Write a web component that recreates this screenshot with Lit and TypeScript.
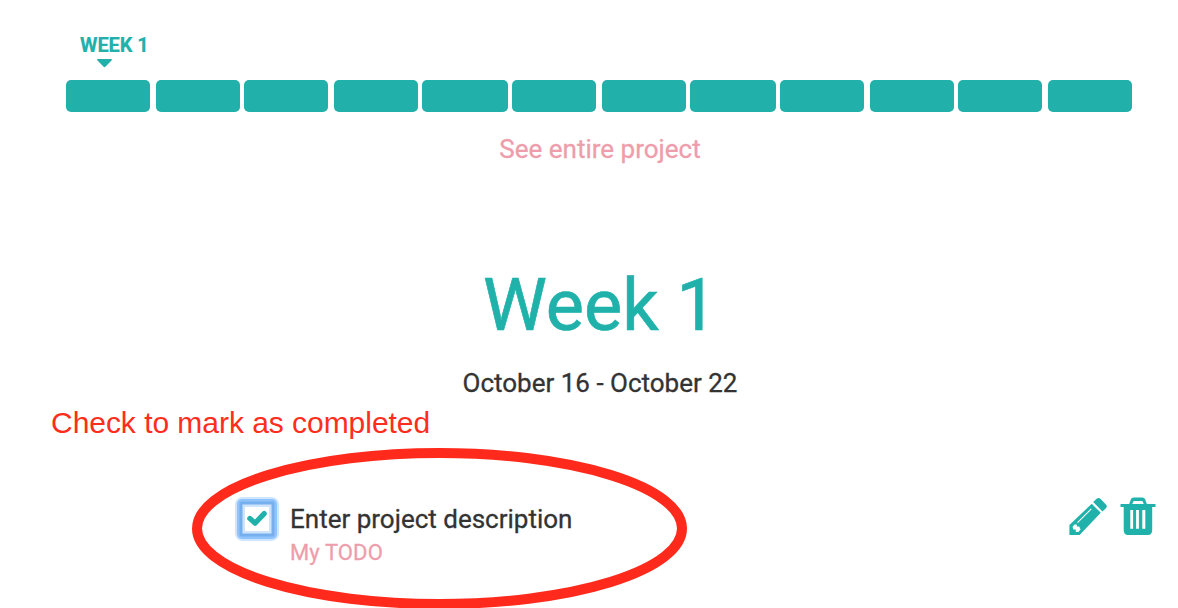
import { LitElement, html, css } from "lit";
import { customElement, property } from "lit/decorators.js";

// [gap before, width] of each week in the timeline
const WEEKS = [
  [0, 84], [6, 84], [4, 84], [6, 84], [4, 86], [4, 84],
  [6, 84], [4, 86], [4, 84], [6, 84], [4, 84], [6, 84],
];

@customElement("week-timeline")
export class WeekTimeline extends LitElement {
  static styles = css`
    :host { display: block; padding: 34px 0 0 66px; color: #22b0aa; }
    .label { margin-left: 14px; height: 22px; font-size: 20px; font-weight: 700; line-height: 22px; letter-spacing: -0.1px; white-space: nowrap; -webkit-text-stroke: 0.2px #22b0aa; }
    .caret { display: block; width: 15px; height: 9px; margin: 3px 0 12px 31px; fill: currentColor; }
    .bars { display: flex; }
    .bar { flex: none; height: 32px; border-radius: 5px; background: #22b0aa; }
  `;
  render() {
    return html`
      <div class="label">WEEK 1</div>
      <svg class="caret" viewBox="0 0 15 9"><path d="M.7 0H14.3Q15.3.5 14.5 1.4L8.4 7.7Q7.5 8.6 6.6 7.7L.5 1.4Q-.3.5.7 0Z" /></svg>
      <div class="bars">
        ${WEEKS.map(([gap, width]) => html`<div class="bar" style="margin-left:${gap}px;width:${width}px"></div>`)}
      </div>
    `;
  }
}

@customElement("todo-item")
export class TodoItem extends LitElement {
  @property() title = "";
  @property() owner = "";
  static styles = css`
    :host { display: flex; align-items: flex-start; }
    .check { flex: none; box-sizing: border-box; width: 44px; height: 44px; }
    .text { margin: 5px 0 0 11px; white-space: nowrap; }
    .title { height: 34px; font-size: 26px; line-height: 34px; color: #333; -webkit-text-stroke: 0.3px #333; }
    .owner { height: 30px; font-size: 22px; line-height: 30px; color: #ee9dab; margin-top: 1px; padding-top: 1px; letter-spacing: 0.1px; -webkit-text-stroke: 0.3px #ee9dab; }
    .actions { display: flex; margin-left: auto; fill: #20b2aa; }
    .pencil { width: 40px; height: 40px; margin-right: 12px; }
    .trash { width: 35px; height: 40px; margin-right: 23px; }
  `;
  render() {
    return html`
      <svg class="check" viewBox="0 0 44 44">
        <rect width="44" height="44" rx="7.5" fill="#cfe5fd" />
        <rect x="2" y="2" width="40" height="40" rx="5" fill="#90c3fc" />
        <rect x="4.5" y="4.5" width="35" height="35" rx="2" fill="#76afee" />
        <rect x="7.5" y="7.5" width="29" height="29" fill="#cfe4fb" />
        <rect x="10" y="10" width="24" height="24" fill="#fff" />
        <path d="M14.8 21.4L20 26.2L29.2 16.6" fill="none" stroke="#20b2aa" stroke-width="5.2" stroke-linecap="round" stroke-linejoin="round" />
      </svg>
      <div class="text">
        <div class="title">${this.title}</div>
        <div class="owner">${this.owner}</div>
      </div>
      <div class="actions">
        <svg class="pencil" viewBox="-0.4 0 40 40">
          <path fill-rule="evenodd" d="M1 38V28L23.3 6.8L32.4 15.8L11.2 38ZM8.7 25.3L9.5 26.1L23.3 12.3L22.5 11.5ZM6 27.4L4.2 29.7L4.8 32.6H7.4V35H10L12.2 32.6L10.8 29.5H8.4V27.4Z" />
          <path d="M24.8 5L28.2 1.8Q30 .2 32 1.8L37.3 7.2Q39.4 9.2 37.5 11.2L34 14.4Z" />
        </svg>
        <svg class="trash" viewBox="-0.5 0 35 40" overflow="visible">
          <path fill-rule="evenodd" d="M0 7H8.7L10.3 2.5Q11 .5 13.2 .5H21.8Q24 .5 24.7 2.5L26.3 7H35V10H31.7V33Q31.7 38 27.3 38H7.5Q3.2 38 3.2 33V10H0ZM11.8 7H23.2L22.3 4.6Q22 4 21 4H14Q13 4 12.7 4.6ZM9.8 13V31.8H12.6V13ZM15.6 13V31.8H18.4V13ZM21.8 13V31.8H24.8V13Z" />
        </svg>
      </div>
    `;
  }
}

@customElement("app-root")
export class AppRoot extends LitElement {
  static styles = css`
    :host { display: block; position: relative; width: 1178px; height: 608px; overflow: hidden; background: #fff; font-family: Roboto, "Liberation Sans", sans-serif; }
    .page { display: flex; flex-direction: column; }
    .link, .heading, .dates { width: 1200px; text-align: center; white-space: nowrap; }
    .link { margin-top: 20px; height: 34px; font-size: 26px; line-height: 34px; color: #ee9dab; -webkit-text-stroke: 0.3px #ee9dab; }
    .heading { margin: 95px 0 0; height: 90px; font-size: 72px; font-weight: 400; line-height: 90px; color: #20b2aa; -webkit-text-stroke: 0.7px #20b2aa; }
    .dates { margin-top: 15px; height: 34px; font-size: 26px; line-height: 34px; color: #333; -webkit-text-stroke: 0.3px #333; }
    .item { margin: 97px 0 0 235px; }
    .note { position: absolute; left: 51px; top: 405px; font: 30px/36px "Liberation Sans", sans-serif; letter-spacing: -0.04px; color: #ff2d1c; white-space: nowrap; }
    .circle { position: absolute; left: 191px; top: 447px; width: 497px; height: 163px; fill: none; stroke: #ff2a1c; stroke-width: 10; }
  `;
  render() {
    return html`
      <div class="page">
        <week-timeline></week-timeline>
        <div class="link">See entire project</div>
        <h1 class="heading">Week 1</h1>
        <div class="dates">October 16 - October 22</div>
        <todo-item class="item" title="Enter project description" owner="My TODO"></todo-item>
      </div>
      <div class="note">Check to mark as completed</div>
      <svg class="circle" viewBox="0 0 497 163"><ellipse cx="248.5" cy="81.5" rx="242.5" ry="75.5" /></svg>
    `;
  }
}
